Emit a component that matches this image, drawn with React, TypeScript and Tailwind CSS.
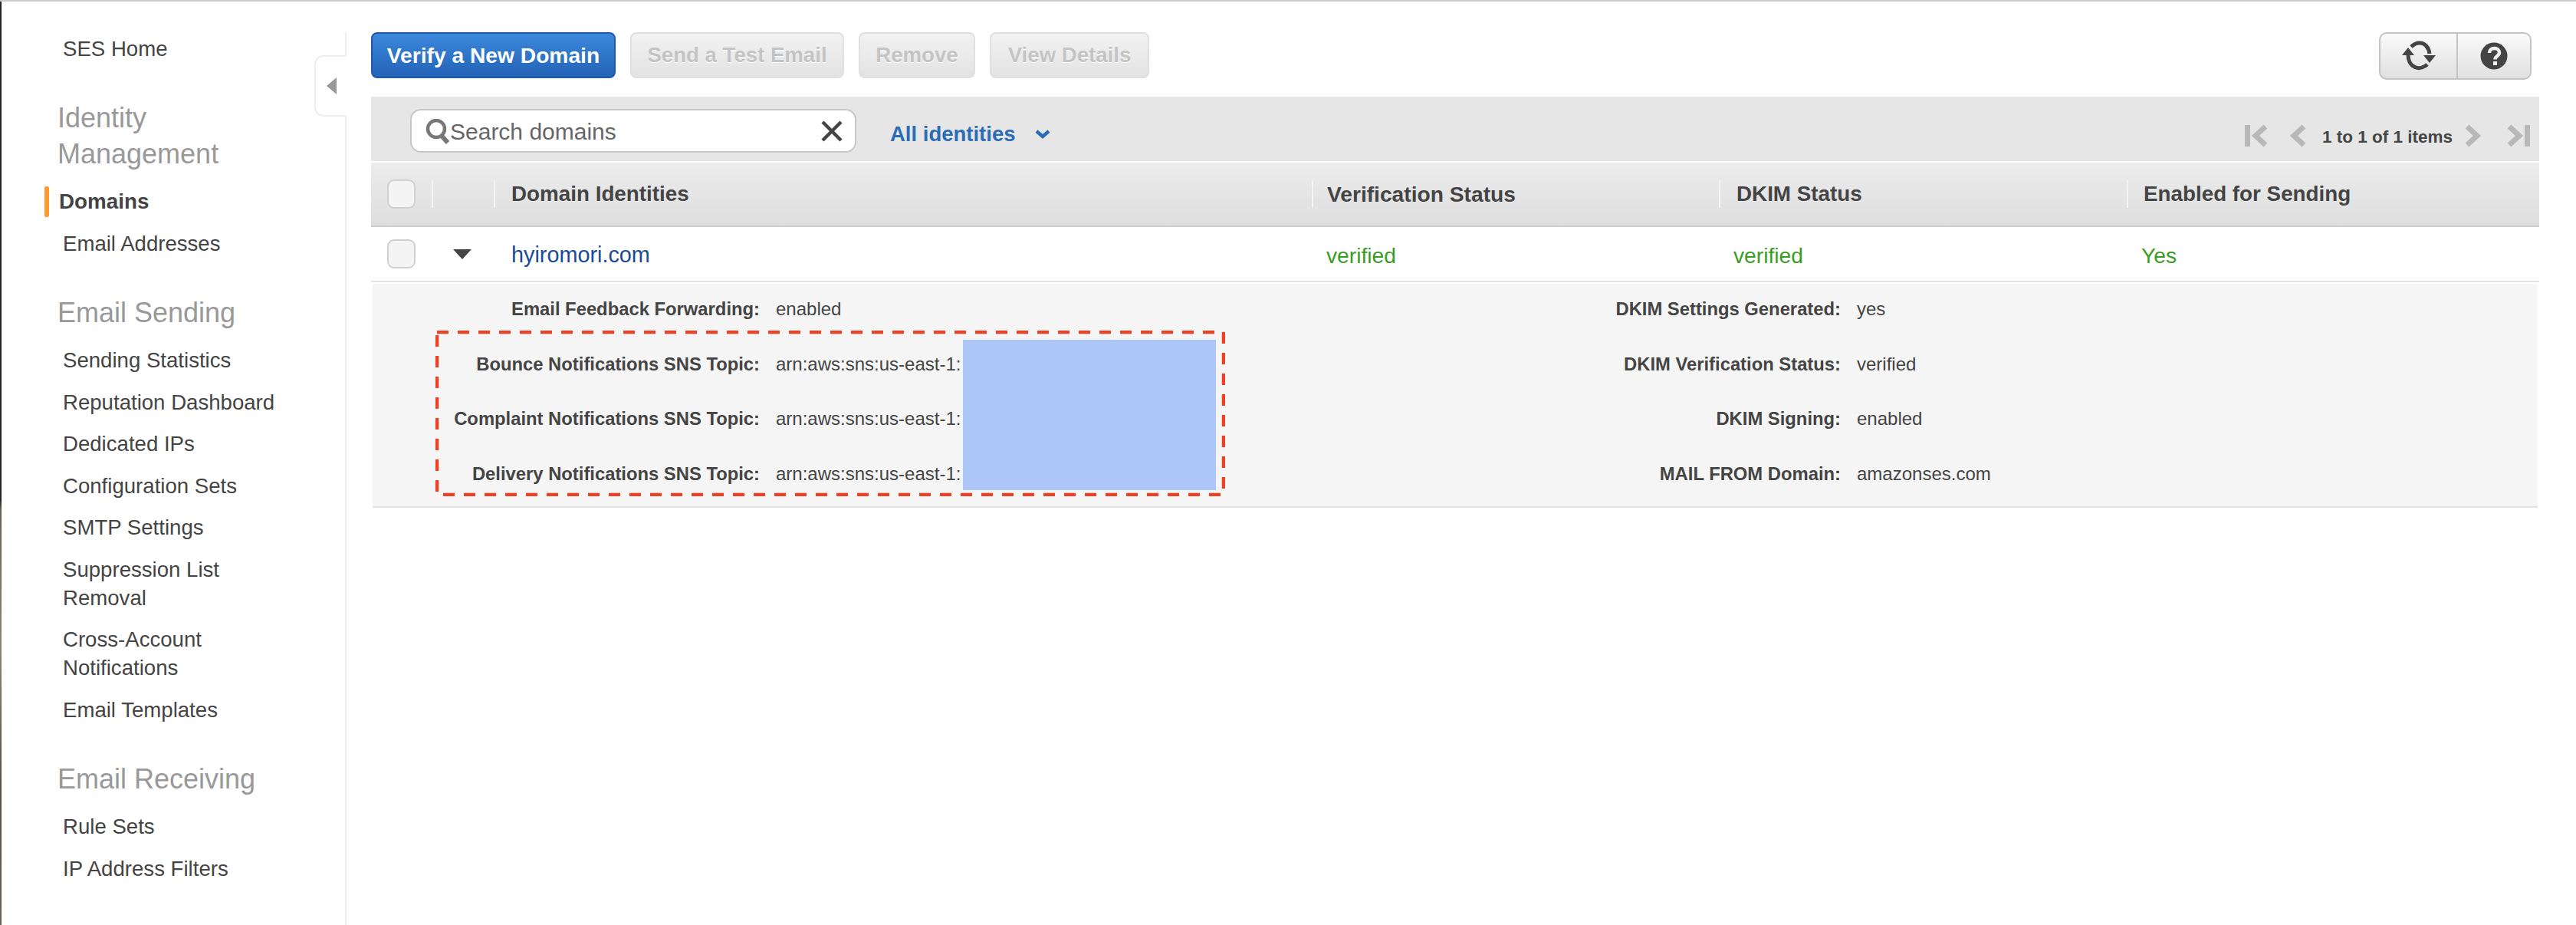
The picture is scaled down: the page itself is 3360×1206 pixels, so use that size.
import type { ReactNode } from 'react';

const FONT = "font-['Liberation_Sans',Arial,sans-serif]";

const NAV_GROUPS = [
  {
    title: 'Identity Management',
    items: ['Domains', 'Email Addresses'],
  },
  {
    title: 'Email Sending',
    items: [
      'Sending Statistics',
      'Reputation Dashboard',
      'Dedicated IPs',
      'Configuration Sets',
      'SMTP Settings',
      'Suppression List Removal',
      'Cross-Account Notifications',
      'Email Templates',
    ],
  },
  {
    title: 'Email Receiving',
    items: ['Rule Sets', 'IP Address Filters'],
  },
];

const DETAILS = [
  ['Email Feedback Forwarding:', 'enabled', 'DKIM Settings Generated:', 'yes'],
  ['Bounce Notifications SNS Topic:', 'arn:aws:sns:us-east-1:', 'DKIM Verification Status:', 'verified'],
  ['Complaint Notifications SNS Topic:', 'arn:aws:sns:us-east-1:', 'DKIM Signing:', 'enabled'],
  ['Delivery Notifications SNS Topic:', 'arn:aws:sns:us-east-1:', 'MAIL FROM Domain:', 'amazonses.com'],
];

function NavItem({ label }: { label: string }) {
  if (label === 'Domains') {
    return (
      <div className="flex items-center h-[54.5px]">
        <span className="w-[6px] h-[40px] ml-[56px] mr-[13px] rounded-[2px] bg-[#ff9933]" />
        <span className="text-[27.8px] leading-[37px] font-bold text-[#444444]">{label}</span>
      </div>
    );
  }
  return <div className="w-[380px] pl-[80px] py-[8.75px] text-[27.6px] leading-[37px] text-[#444444]">{label}</div>;
}

function Sidebar() {
  return (
    <nav className="w-[448px] shrink-0 pt-[34px]">
      <NavItem label="SES Home" />
      {NAV_GROUPS.map((group) => (
        <div key={group.title} className="mt-[39px]">
          <h2 className="w-[400px] pl-[73px] mb-[12px] text-[36px] leading-[47px] font-normal text-[#999999]">{group.title}</h2>
          {group.items.map((item) => (
            <NavItem key={item} label={item} />
          ))}
        </div>
      ))}
    </nav>
  );
}

function CollapseTab() {
  return (
    <div className="relative w-[2px] mt-[40px] shrink-0 bg-[#eeeeee]">
      <div className="absolute left-[-40px] top-[30px] w-[42px] h-[80px] flex items-center pl-[14px] bg-white border-2 border-r-0 border-[#eeeeee] rounded-l-[12px]">
        <svg width="13" height="22" viewBox="0 0 13 22">
          <path d="M13 0V22L0 11Z" fill="#999999" />
        </svg>
      </div>
    </div>
  );
}

function ActionButton({ children, className }: { children: ReactNode; className: string }) {
  return (
    <button className={`h-[60px] rounded-[8px] border-2 font-bold text-center ${className}`}>
      {children}
    </button>
  );
}

const DISABLED_BUTTON = 'border-[#e0e0e0] bg-gradient-to-b from-[#f2f2f2] to-[#e3e3e3] text-[27.6px] text-[#c4c4c4] [text-shadow:0_1px_0_#ffffff]';

function RefreshIcon() {
  return (
    <svg width="44" height="40" viewBox="0 0 44 40" fill="none">
      <path d="M8 18C8 22 8 24 10 28C13 34 20 37 26 35C29 34 31 33 33 31" stroke="#444444" strokeWidth="5" />
      <path d="M12 8C15 5 19 3 23 3C30 3 35 9 36 17" stroke="#444444" strokeWidth="5" />
      <path d="M0 19L8 9L16 19Z" fill="#444444" />
      <path d="M28 19H44L36 29Z" fill="#444444" />
    </svg>
  );
}

function HelpIcon() {
  return (
    <svg width="36" height="36" viewBox="0 0 36 36">
      <circle cx="18" cy="18" r="17.5" fill="#444444" />
      <path d="M12 14C12 10 15 8 18.5 8C22 8 25 10 25 13.5C25 18 19.5 18 19.5 22.5" fill="none" stroke="#f0f0f0" strokeWidth="4.5" />
      <rect x="17" y="25" width="5" height="5" fill="#f0f0f0" />
    </svg>
  );
}

function ActionBar() {
  return (
    <div className="flex items-start justify-between pr-[10px]">
      <div className="flex gap-[19px]">
        <ActionButton className="w-[319px] border-[#2059a8] bg-gradient-to-b from-[#3c88db] to-[#2363b7] text-[28.2px] text-white">
          Verify a New Domain
        </ActionButton>
        <ActionButton className={`w-[279px] ${DISABLED_BUTTON}`}>Send a Test Email</ActionButton>
        <ActionButton className={`w-[152px] ${DISABLED_BUTTON}`}>Remove</ActionButton>
        <ActionButton className={`w-[208px] ${DISABLED_BUTTON}`}>View Details</ActionButton>
      </div>
      <div className="flex w-[199px] h-[62px] rounded-[10px] border-2 border-[#c4c4c4] bg-gradient-to-b from-[#fafafa] to-[#e0e0e0]">
        <div className="flex items-center justify-center w-[101px] border-r-2 border-[#c4c4c4]">
          <RefreshIcon />
        </div>
        <div className="flex items-center justify-center flex-1">
          <HelpIcon />
        </div>
      </div>
    </div>
  );
}

function Chevron({ flip, bar }: { flip?: boolean; bar?: boolean }) {
  return (
    <svg width="30" height="30" viewBox="0 0 30 30" className={flip ? '-scale-x-100' : ''} fill="none">
      {bar && <rect x="0" y="1" width="7" height="28" fill="#b8b8b8" />}
      <path d={bar ? 'M27 3L14 15L27 27' : 'M24 3L11 15L24 27'} stroke="#b8b8b8" strokeWidth="7" />
    </svg>
  );
}

function Toolbar() {
  return (
    <div className="flex items-start h-[84px] bg-[#e6e6e6] pl-[51px] pr-[12px]">
      <div className="flex items-center w-[582px] h-[57px] mt-[16px] pl-[18px] pr-[16px] rounded-[14px] border-2 border-[#c8c8c8] bg-white">
        <svg width="32" height="34" viewBox="0 0 32 34" fill="none" className="mt-[3px] shrink-0">
          <circle cx="14" cy="13" r="11" stroke="#777777" strokeWidth="4.5" />
          <path d="M21 22L29 31" stroke="#777777" strokeWidth="6" />
        </svg>
        <span className="mt-[2px] text-[30px] text-[#666666] mr-auto">Search domains</span>
        <svg width="28" height="28" viewBox="0 0 28 28" fill="none">
          <path d="M2 2L26 26M26 2L2 26" stroke="#444444" strokeWidth="4.5" />
        </svg>
      </div>
      <span className="ml-[44px] mt-[33px] text-[27.5px] leading-[32px] font-bold text-[#2b6cb5]">All identities</span>
      <svg width="20" height="12" viewBox="0 0 20 12" fill="none" className="ml-[25px] mt-[43px]">
        <path d="M2 2L10 9L18 2" stroke="#2b6cb5" strokeWidth="4.5" />
      </svg>
      <div className="flex items-center ml-auto mt-[32px]">
        <Chevron bar />
        <span className="ml-[23px]"><Chevron /></span>
        <span className="ml-[18px] mr-[13px] mt-[4px] text-[22.5px] font-bold text-[#444444]">1 to 1 of 1 items</span>
        <Chevron flip />
        <span className="ml-[28px]"><Chevron flip bar /></span>
      </div>
    </div>
  );
}

function Checkbox() {
  return <span className="block w-[37px] h-[38px] ml-[21px] rounded-[9px] border-2 border-[#d0d0d0] bg-[#f4f4f4]" />;
}

const GRID = 'grid grid-cols-[79px_81px_1067px_531px_532px_1fr] items-center';

function HeaderCell({ label, className }: { label?: string; className: string }) {
  return (
    <div className={`flex items-center h-[36px] border-l-2 border-[#f4f4f4] text-[27.8px] font-bold text-[#444444] ${className}`}>
      {label}
    </div>
  );
}

function DomainTable() {
  return (
    <>
      <div className={`${GRID} mt-[2px] h-[84px] border-b-2 border-[#cccccc] bg-gradient-to-b from-[#ececec] to-[#dedede]`}>
        <Checkbox />
        <HeaderCell className="" />
        <HeaderCell label="Domain Identities" className="pl-[21px]" />
        <HeaderCell label="Verification Status" className="pl-[18px] text-[28.2px]" />
        <HeaderCell label="DKIM Status" className="pl-[21px]" />
        <HeaderCell label="Enabled for Sending" className="pl-[20px]" />
      </div>
      <div className={`${GRID} h-[72px] border-b-2 border-[#e2e2e2] text-[28.2px]`}>
        <Checkbox />
        <svg width="24" height="13" viewBox="0 0 24 13" className="ml-[28px]">
          <path d="M0 0H24L12 13Z" fill="#444444" />
        </svg>
        <span className="pl-[23px] text-[28.8px] text-[#1b4a94] pt-[4px]">hyiromori.com</span>
        <span className="pl-[19px] text-[#3a9d23] pt-[4px]">verified</span>
        <span className="pl-[19px] text-[#3a9d23] pt-[4px]">verified</span>
        <span className="pl-[19px] text-[#3a9d23] pt-[4px]">Yes</span>
      </div>
    </>
  );
}

function DetailPanel() {
  return (
    <div className="relative mt-[2px] ml-[2px] mr-[2px] pb-[9px] border-b-2 border-[#e2e2e2] bg-[#f5f5f5] text-[24px] text-[#444444]">
      <div className="flex flex-col gap-[5.5px]">
        {DETAILS.map(([label, value, dkimLabel, dkimValue]) => (
          <div key={label} className="grid grid-cols-[505px_500px_910px_1fr] items-center h-[66px]">
            <span className="text-right text-[23.8px] font-bold">{label}</span>
            <span className="pl-[21px]">{value}</span>
            <span className="text-right text-[23.8px] font-bold">{dkimLabel}</span>
            <span className="pl-[21px]">{dkimValue}</span>
          </div>
        ))}
      </div>
      {/* redaction and highlight drawn over the screenshot */}
      <div className="absolute left-[770px] top-[73px] w-[330px] h-[196px] bg-[#adc6f8]" />
      <svg width="1030" height="216" className="absolute left-[82px] top-[61px]" fill="none">
        <rect x="2" y="2" width="1026" height="212" stroke="#ee4023" strokeWidth="4.5" strokeDasharray="15 12" />
      </svg>
    </div>
  );
}

export default function App() {
  return (
    <div className={`flex w-[3360px] h-[1206px] overflow-hidden border-t-2 border-[#cccccc] bg-white ${FONT}`}>
      <div className="w-[2px] shrink-0 bg-[linear-gradient(to_bottom,#23252a_0,#23252a_54%,#6b6256_55%,#8f8672_70%,#5a5046_85%,#6e6258_100%)]" />
      <Sidebar />
      <CollapseTab />
      <main className="w-[2828px] ml-[32px] pt-[40px]">
        <ActionBar />
        <div className="mt-[22px]">
          <Toolbar />
          <DomainTable />
          <DetailPanel />
        </div>
      </main>
    </div>
  );
}
